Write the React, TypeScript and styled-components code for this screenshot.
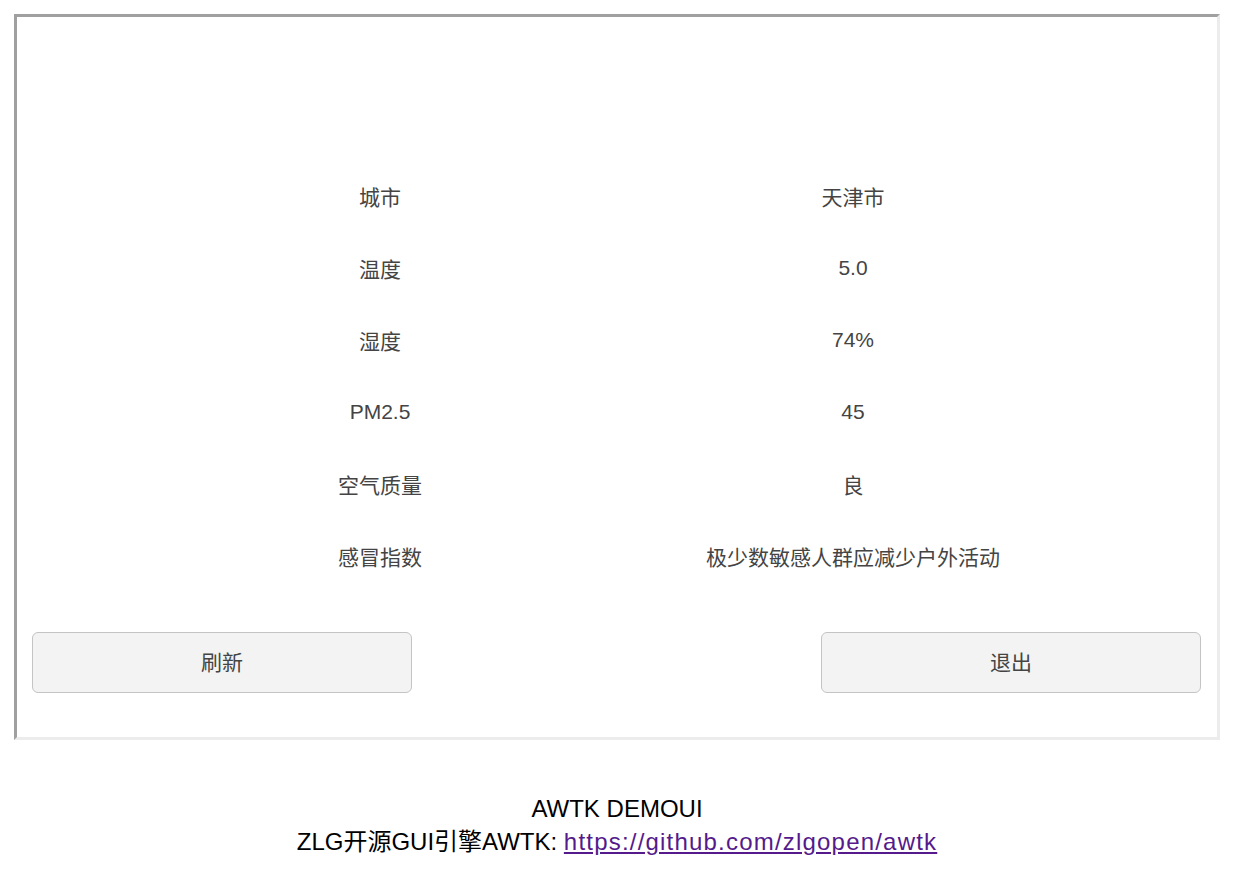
import * as React from "react";
import styled, { createGlobalStyle } from "styled-components";

const GlobalStyle = createGlobalStyle`
  body {
    margin: 0;
    background: #ffffff;
    font-family: "Liberation Sans", "Noto Sans CJK SC", sans-serif;
  }
`;

const Page = styled.div`
  padding: 14px 0 0 14px;
`;

const Screen = styled.div`
  width: 1200px;
  height: 720px;
  border-style: solid;
  border-width: 3px;
  border-color: #a0a0a0 #ececec #ececec #a0a0a0;
  background: #ffffff;
  display: flex;
  flex-direction: column;
  color: #444444;
  font-size: 21px;
`;

const InfoGrid = styled.div`
  margin-top: 143px;
  padding-left: 63px;
  display: grid;
  grid-template-columns: 600px 346px;
  grid-auto-rows: 72px;
`;

const Cell = styled.div`
  display: flex;
  align-items: center;
  justify-content: center;
  white-space: nowrap;
`;

const ButtonBar = styled.div`
  margin-top: 40px;
  padding: 0 16px 0 15px;
  display: flex;
  justify-content: space-between;
`;

const Button = styled.button`
  width: 380px;
  height: 61px;
  border: 1.5px solid #c4c4c4;
  border-radius: 6px;
  background: #f3f3f3;
  color: #444444;
  font-family: inherit;
  font-size: 21px;
  padding: 0 0 3px;
`;

const Footer = styled.div`
  margin-top: 52px;
  width: 1234px;
  margin-left: -14px;
  text-align: center;
  font-size: 24px;
  line-height: 33px;
  color: #000000;
`;

const Link = styled.a`
  color: #551a8b;
  letter-spacing: 1.2px;
`;

const rows: [string, string][] = [
  ["城市", "天津市"],
  ["温度", "5.0"],
  ["湿度", "74%"],
  ["PM2.5", "45"],
  ["空气质量", "良"],
  ["感冒指数", "极少数敏感人群应减少户外活动"],
];

export default function App() {
  return (
    <Page>
      <GlobalStyle />
      <Screen>
        <InfoGrid>
          {rows.map(([label, value]) => (
            <React.Fragment key={label}>
              <Cell>{label}</Cell>
              <Cell>{value}</Cell>
            </React.Fragment>
          ))}
        </InfoGrid>
        <ButtonBar>
          <Button>刷新</Button>
          <Button>退出</Button>
        </ButtonBar>
      </Screen>
      <Footer>
        <div>AWTK DEMOUI</div>
        <div>
          ZLG开源GUI引擎AWTK: <Link href="https://github.com/zlgopen/awtk">https://github.com/zlgopen/awtk</Link>
        </div>
      </Footer>
    </Page>
  );
}
